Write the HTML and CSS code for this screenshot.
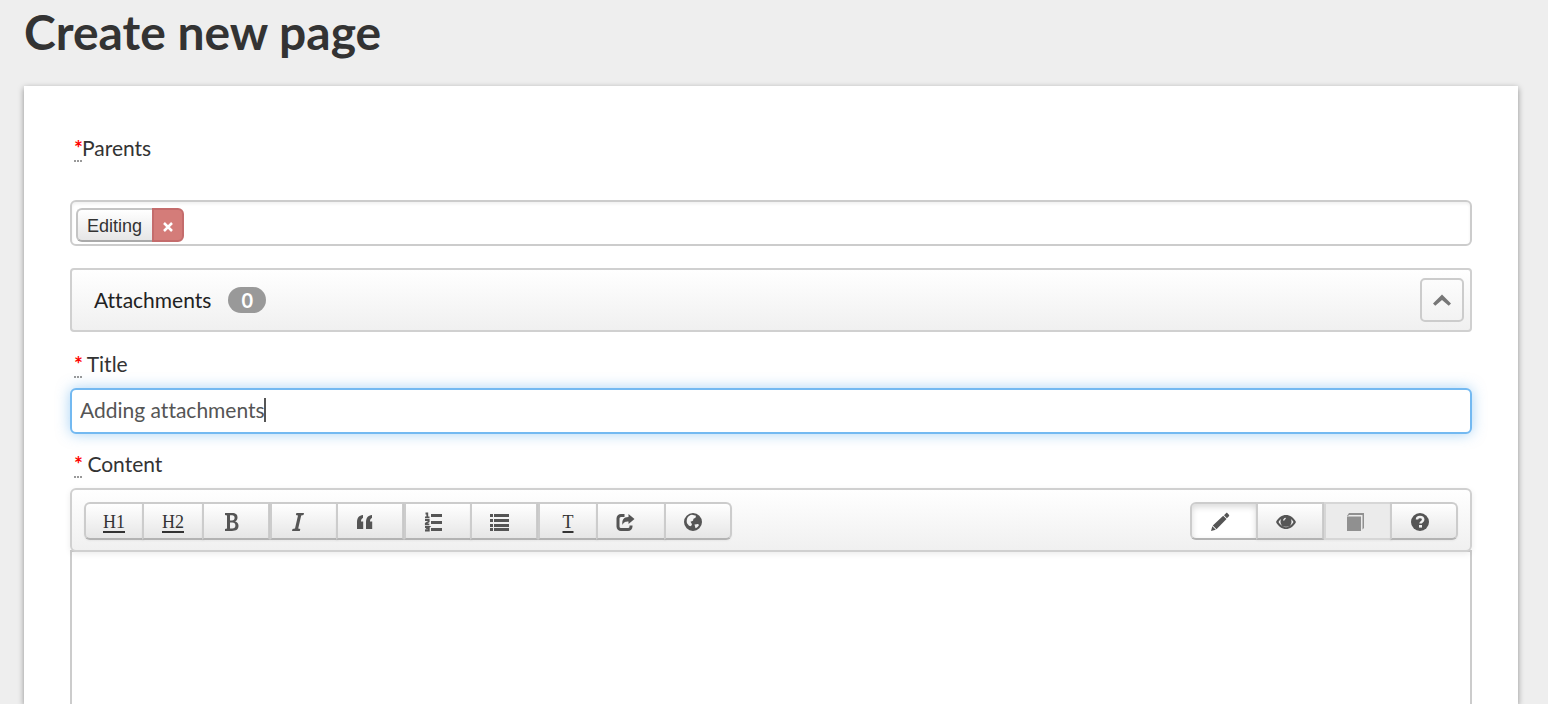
FILE: index.html
```html
<!DOCTYPE html>
<html lang="en">
<head>
<meta charset="utf-8">
<meta name="viewport" content="width=device-width, initial-scale=1.0">
<title>Create new page</title>
<link rel="stylesheet" href="styles.css">
</head>
<body>
	<h1>Create new page</h1>
	<form class="card">
		<label class="field_label parents_label" for="parents"><abbr class="required">*</abbr>Parents</label>
		<div class="token_field">
			<span class="token"><span class="token_name">Editing</span><button type="button" class="token_remove" aria-label="Remove Editing"><svg width="10" height="10" viewBox="0 0 10 10"><path d="M1 1l8 8M9 1l-8 8" stroke="#fff" stroke-width="2.5" fill="none"/></svg></button></span>
			<input type="text" id="parents" class="token_input">
		</div>

		<div class="attachments">
			<span>Attachments</span>
			<span class="badge">0</span>
			<button type="button" class="collapse" aria-label="Collapse"><svg width="18" height="12" viewBox="0 0 16 10"><path d="M0 8L8 0l8 8-2 2-6-5-6 5z" fill="#777"/></svg></button>
		</div>

		<label class="field_label" for="title"><abbr class="required">*</abbr> Title</label>
		<div class="title_field">
			<input type="text" id="title" class="title_input" value="Adding attachments">
			<span class="caret"></span>
		</div>

		<label class="field_label" for="content"><abbr class="required">*</abbr> Content</label>
		<div class="toolbar">
			<div class="group">
				<button type="button" class="btn text">H1</button>
				<button type="button" class="btn text">H2</button>
				<button type="button" class="btn" aria-label="Bold"><svg class="icon" viewBox="0 0 20 20"><path fill-rule="evenodd" d="M3 1h7c4 0 5.500 1.600 5.500 4.400 0 2-1 3.400-2.500 4 2.200.4 3.500 2 3.500 4.400 0 3.400-2.300 5.200-6.500 5.200H3v-2l2-.4V3.400L3 3zM8 3.200v5.400h2c1.800 0 2.600-1 2.600-2.800S11.800 3.200 10 3.200zM8 10.600v6h2.200c2.200 0 3.200-1 3.200-3s-1-3-3.200-3z"/></svg></button>
				<button type="button" class="btn apart" aria-label="Italic"><svg class="icon" viewBox="0 0 20 20"><path d="M6.400 1H14l-.5 2-2.300.5-3 13 2.100.5-.5 2H2l.5-2 2.500-.5 3-13L5.900 3z"/></svg></button>
				<button type="button" class="btn" aria-label="Quote"><svg class="icon" viewBox="0 0 20 20"><path d="M7 3v3C5.600 6.600 5 7.500 5 9.500h2.200V17H1v-7C1 6 3 3.300 7 3zM16 3v3c-1.400.6-2 1.500-2 3.500h2.200V17H10v-7c0-4 2-6.700 6-7z"/></svg></button>
				<button type="button" class="btn apart" aria-label="Numbered list"><svg class="icon" viewBox="0 0 20 20"><path d="M7 2h11v3H7zM7 9h11v3H7zM7 16h11v3H7z"/><path d="M1.500 1.500h1.800V5M1 5.300h4.500M1 8h3.700v1.500L1.800 11.500v.8h3.500M1 15h4l-1.800 1.700h1.600v2H1" fill="none" stroke="#555" stroke-width="1.800"/></svg></button>
				<button type="button" class="btn" aria-label="Bulleted list"><svg class="icon" viewBox="0 0 20 20"><path d="M0 2h3v3H0zM0 7h3v3H0zM0 12h3v3H0zM0 16h3v3H0zM4 2h15v3H4zM4 7h15v3H4zM4 12h15v3H4zM4 16h15v3H4z"/></svg></button>
				<button type="button" class="btn text apart">T</button>
				<button type="button" class="btn" aria-label="Link"><svg class="icon wide" viewBox="0 0 22 20"><path d="M8.500 3.500H5A3 3 0 0 0 2 6.500v8a3 3 0 0 0 3 3h7a3 3 0 0 0 3-3V13.500" fill="none" stroke="#555" stroke-width="3"/><path d="M12.500 2l6 5-6 5V9.500c-3 0-4.800.5-6 3.500C5.500 8.500 7.500 5 12.500 5z"/></svg></button>
				<button type="button" class="btn" aria-label="Image"><svg class="icon" viewBox="0 0 20 20"><path fill-rule="evenodd" d="M9 1a9 9 0 1 0 0 18 9 9 0 0 0 0-18zM8 2.800l4 1-.5 2-2 1-.5 2-2.500 1 1.500 2.500-1 2-2-.5-2-2.500C2 7 4 3.300 8 2.800zM10.500 12.500l3.500-.5 1 1c-.7 1.500-2 2.700-3.500 3.300z"/></svg></button>
			</div>
			<div class="group">
				<button type="button" class="btn active" aria-label="Edit"><svg class="icon" viewBox="0 0 20 20"><path d="M14 3.200L16 1.200c.5-.5 1-.4 1.500.1l1.400 1.400c.5.5.5 1 0 1.500l-2 2zM13.200 3.800l3.300 3.300L6.500 17.200 2.800 13.500zM2.300 14.300l3.500 3.500L1 19z"/></svg></button>
				<button type="button" class="btn" aria-label="Preview"><svg class="icon" viewBox="0 0 20 20"><path fill-rule="evenodd" d="M0 10C2.500 5.200 6 3 10 3S17.500 5.200 20 10c-2.500 4.800-6 7-10 7S2.500 14.800 0 10zM2.500 10c1.700 3 4.200 4.700 7.500 4.700s5.800-1.700 7.500-4.700c-.7-1.200-1.600-2.200-2.700-3a5.500 5.500 0 1 1-9.600 0c-1.100.8-2 1.800-2.700 3zM7 8.500c.2-1.500 1.200-2.500 2.700-2.800v1.400c-.8.200-1.200.7-1.300 1.500z"/></svg></button>
				<button type="button" class="btn apart" disabled aria-label="Split view"><svg class="icon" viewBox="0 0 20 20"><path d="M3 4.500h14V19H3zM3 4l2-3h15v15l-1.500 1.500V3H5L4 4z"/></svg></button>
				<button type="button" class="btn" aria-label="Help"><svg class="icon" viewBox="0 0 20 20"><circle cx="10" cy="10" r="9"/><path d="M7 7.500C7 5.800 8.200 5 10 5s3.200 1 3.200 2.700c0 2-2.700 2-2.700 3.900" fill="none" stroke="#f2f2f2" stroke-width="2.500"/><path d="M9 13h3v2.600H9z" fill="#f2f2f2"/></svg></button>
			</div>
		</div>
		<textarea id="content" class="content"></textarea>
	</form>
</body>
</html>
```

FILE: styles.css
```css
* {
	box-sizing: border-box;
}
body {
	display: flex;
	flex-direction: column;
	height: 100vh;
	margin: 0;
	padding: 0 30px 0 24px;
	background-color: #eee;
	color: #333;
	font-family: Lato, Arial, sans-serif;
	font-size: 21px;
	font-variant-ligatures: none;
	line-height: 28px;
}
h1 {
	margin: 2px 0 24px;
	font-size: 48px;
	line-height: 60px;
}
button, input, textarea {
	margin: 0;
	padding: 0;
	border: 0;
	font: inherit;
	outline: 0;
}
svg {
	display: block;
}
.card {
	display: flex;
	flex: 1;
	flex-direction: column;
	padding: 48px 46px 0;
	background-color: white;
	box-shadow: 0 2px 6px rgba(0,0,0,0.4);
}

.field_label {
	height: 28px;
	padding-left: 4px;
}
.parents_label {
	margin-bottom: 38px;
}
.required {
	display: inline-block;
	width: 8px;
	height: 28px;
	border-bottom: 2px dotted #999;
	color: red;
	font-weight: bold;
	line-height: 28px;
	vertical-align: top;
	text-decoration: none;
}

/* parents */
.token_field {
	display: flex;
	align-items: center;
	height: 46px;
	padding: 4px 4px 0;
	border: 2px solid #ccc;
	border-radius: 6px;
	box-shadow: inset 0 2px 3px rgba(0,0,0,0.06);
}
.token {
	display: flex;
	height: 34px;
	font-family: "Liberation Sans", Arial, sans-serif;
	font-size: 18px;
}
.token_name {
	padding: 0 10px 0 9px;
	border: 2px solid #c4c4c4;
	border-right: 0;
	border-bottom-color: #aaa;
	border-radius: 6px 0 0 6px;
	background: linear-gradient(#fff, #e6e6e6);
	line-height: 32px;
}
.token_remove {
	display: flex;
	align-items: center;
	justify-content: center;
	width: 32px;
	padding-top: 4px;
	border: 2px solid #c46c6c;
	border-radius: 0 6px 6px 0;
	background-color: #d47c79;
}
.token_input {
	flex: 1;
	min-width: 0;
	background: none;
}

/* attachments */
.attachments {
	display: flex;
	align-items: center;
	height: 64px;
	margin: 22px 0 18px;
	padding: 0 6px 0 22px;
	border: 2px solid #d0d0d0;
	border-radius: 4px;
	background: linear-gradient(#fff, #f0f0f0);
	color: #222;
}
.badge {
	margin-left: 17px;
	padding: 0 13px;
	border-radius: 13px;
	background-color: #999;
	color: white;
	font-size: 20px;
	font-weight: bold;
	line-height: 26px;
}
.collapse {
	display: flex;
	align-items: center;
	justify-content: center;
	width: 44px;
	height: 44px;
	margin-left: auto;
	border: 2px solid #ccc;
	border-radius: 5px;
	background: none;
}

/* title */
.title_field {
	position: relative;
	margin: 10px 0 16px;
}
.title_input {
	display: block;
	width: 100%;
	height: 46px;
	padding: 0 8px 4px;
	border: 2px solid #73b9f1;
	border-radius: 6px;
	box-shadow: 0 0 14px rgba(82,168,236,0.5);
	color: #555;
}
.caret {
	position: absolute;
	top: 10px;
	left: 194px;
	width: 2px;
	height: 24px;
	background-color: #555;
}

/* editor */
.toolbar {
	display: flex;
	justify-content: space-between;
	margin-top: 10px;
	padding: 12px 12px 10px;
	border: 2px solid #d0d0d0;
	border-radius: 6px;
	background: linear-gradient(#fff, #f0f0f0);
	box-shadow: 0 2px 6px rgba(0,0,0,0.08);
	z-index: 1;
}
.group {
	display: flex;
}
.btn {
	height: 38px;
	margin-left: -2px;
	padding: 0 18px;
	border: 2px solid #ccc;
	border-bottom-color: #b3b3b3;
	background: linear-gradient(#fff, #e6e6e6);
	box-shadow: 0 1px 2px rgba(0,0,0,0.05);
	color: #333;
}
.btn.apart {
	margin-left: 0;
}
.btn:first-child {
	margin-left: 0;
	border-radius: 6px 0 0 6px;
}
.btn:last-child {
	border-radius: 0 6px 6px 0;
}
.text {
	min-width: 60px;
	padding: 2px 17px 0;
	font-family: "Liberation Serif", serif;
	font-size: 18px;
	text-decoration: underline 2px;
	text-underline-offset: 3px;
}
.text + .text {
	min-width: 62px;
}
.icon {
	width: 20px;
	height: 20px;
	margin: 2px 8px 0 0;
	fill: #555;
}
.icon.wide {
	width: 22px;
}
.active {
	background: white;
	box-shadow: inset 0 3px 6px rgba(0,0,0,0.15);
}
.btn:disabled {
	border-color: #d6d6d6;
	background: #ebebeb;
}
.btn:disabled .icon {
	fill: #909090;
}
.content {
	flex: 1;
	margin-top: -2px;
	padding: 12px;
	border: solid #ccc;
	border-width: 2px 2px 0;
	resize: none;
}
```
